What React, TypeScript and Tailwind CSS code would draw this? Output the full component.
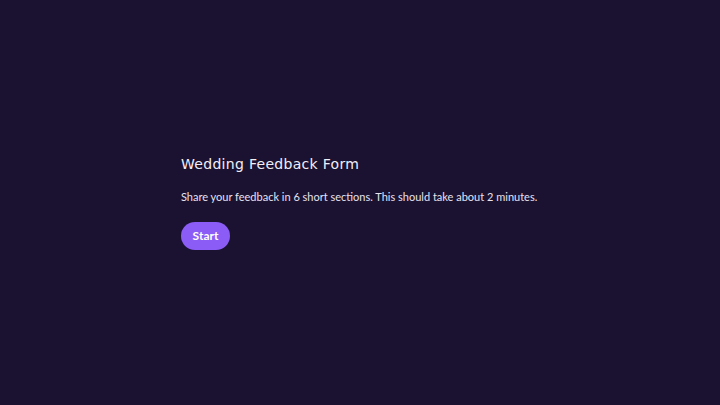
export default function App() {
  return (
    <div className="w-[720px] h-[405px] bg-[#1b1232] flex items-center" style={{ fontFamily: "Lato, 'Noto Sans', sans-serif" }}>
      <div className="ml-[181px] flex flex-col items-start">
        <h1 className="text-[14px] leading-[18px] font-medium text-[#f1eef8] tracking-[0.3px]" style={{ fontFamily: "'DejaVu Sans', sans-serif" }}>Wedding Feedback Form</h1>
        <p className="mt-[17px] text-[11px] leading-[14px] text-[#e6e2f0]">Share your feedback in 6 short sections. This should take about 2 minutes.</p>
        <button className="mt-[18px] h-[28px] w-[49px] rounded-full bg-[#8b5cf6] text-white text-[12px] font-bold">Start</button>
      </div>
    </div>
  );
}
